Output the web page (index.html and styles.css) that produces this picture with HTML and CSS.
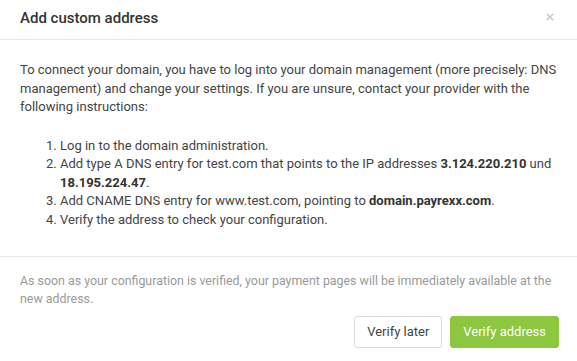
FILE: index.html
```html
<!DOCTYPE html>
<html lang="en">
<head>
    <meta charset="UTF-8">
    <meta name="viewport" content="width=device-width, initial-scale=1.0">
    <title>Add custom address</title>
    <link rel="stylesheet" href="styles.css">
</head>
<body>

    <div class="modal">
        <!-- Header -->
        <div class="modal-header">
            <h4 class="modal-title">Add custom address</h4>
            <button type="button" class="close" aria-label="Close">
                <svg width="8" height="8" viewBox="0 0 8 8">
                    <path d="M0.7 0.7 L7.3 7.3 M7.3 0.7 L0.7 7.3" stroke="#c9c9c9" stroke-width="1.6" fill="none"/>
                </svg>
            </button>
        </div>

        <!-- Body -->
        <div class="modal-body">
            <p>To connect your domain, you have to log into your domain management (more precisely: DNS management) and change your settings. If you are unsure, contact your provider with the following instructions:</p>
            <ol>
                <li>Log in to the domain administration.</li>
                <li>Add type A DNS entry for test.com that points to the IP addresses <strong>3.124.220.210</strong> und <strong>18.195.224.47</strong>.</li>
                <li>Add CNAME DNS entry for www.test.com, pointing to <strong>domain.payrexx.com</strong>.</li>
                <li>Verify the address to check your configuration.</li>
            </ol>
        </div>

        <!-- Footer -->
        <div class="modal-footer">
            <p class="hint">As soon as your configuration is verified, your payment pages will be immediately available at the new address.</p>
            <div class="actions">
                <button type="button" class="btn btn-default">Verify later</button>
                <button type="button" class="btn btn-primary">Verify address</button>
            </div>
        </div>
    </div>

</body>
</html>
```

FILE: styles.css
```css
body {
    margin: 0;
    font-family: Roboto, "Liberation Sans", sans-serif;
    font-size: 13px;
    line-height: 1.42857;
    color: #444;
    background-color: #fff;
}

/* Header */
.modal-header {
    display: flex;
    justify-content: space-between;
    align-items: center;
    padding: 8px 20px 10px 20px;
    border-bottom: 1px solid #e5e5e5;
}

.modal-title {
    margin: 0;
    font-size: 15px;
    font-weight: 500;
    line-height: 21px;
    color: #333;
}

.close {
    display: flex;
    padding: 0;
    margin: 0 3px 3px 0;
    border: none;
    background: none;
    cursor: pointer;
}

/* Body */
.modal-body {
    padding: 21px 20px 26px 20px;
}

.modal-body p {
    margin: 0 0 20px 0;
}

.modal-body ol {
    margin: 0;
    padding-left: 40px;
}

.modal-body strong {
    font-weight: 700;
    color: #333;
}

/* Footer */
.modal-footer {
    padding: 15px 18px 12px 20px;
    border-top: 1px solid #e5e5e5;
}

.hint {
    margin: 0 0 8px 0;
    font-size: 12.4px;
    line-height: 18px;
    color: #9a9a9a;
}

.actions {
    display: flex;
    justify-content: flex-end;
    gap: 8px;
}

.btn {
    padding: 6px 12px;
    font-family: inherit;
    font-size: 13px;
    line-height: 1.42857;
    border: 1px solid transparent;
    border-radius: 3px;
    cursor: pointer;
}

.btn-default {
    background-color: #fff;
    border-color: #d9d9d9;
    color: #444;
}

.btn-primary {
    background-color: #8dc63f;
    border-color: #8dc63f;
    color: #fff;
}
```
